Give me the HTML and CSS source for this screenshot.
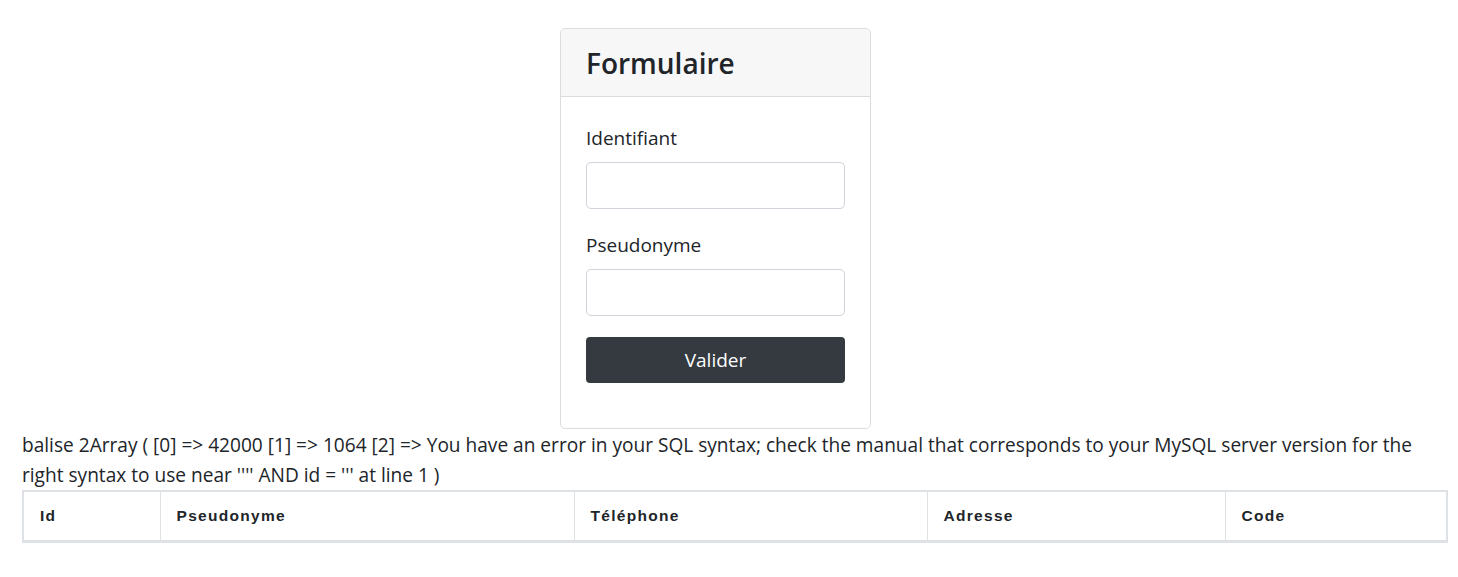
FILE: index.html
```html
<!DOCTYPE html>
<html lang="fr">
<head>
<meta charset="utf-8">
<title>Formulaire</title>
<link rel="stylesheet" href="styles.css">
</head>
<body>
<div class="page">
  <div class="card">
    <div class="card-header"><h3 class="card-title">Formulaire</h3></div>
    <form class="card-body">
      <div class="form-group">
        <label class="label" for="ident">Identifiant</label>
        <input class="input" id="ident" type="text">
      </div>
      <div class="form-group">
        <label class="label" for="pseudo">Pseudonyme</label>
        <input class="input" id="pseudo" type="text">
      </div>
      <button class="btn" type="button">Valider</button>
    </form>
  </div>
  <p class="error">balise 2Array ( [0] =&gt; 42000 [1] =&gt; 1064 [2] =&gt; You have an error in your SQL syntax; check the manual that corresponds to your MySQL server version for the right syntax to use near '''' AND id = ''' at line 1 )</p>
  <table class="table">
    <colgroup>
      <col class="c-id"><col class="c-pseudo"><col class="c-tel"><col class="c-adr"><col class="c-code">
    </colgroup>
    <thead>
      <tr><th>Id</th><th>Pseudonyme</th><th>Téléphone</th><th>Adresse</th><th>Code</th></tr>
    </thead>
  </table>
</div>
</body>
</html>
```
FILE: styles.css
```css
* { box-sizing: border-box; }
html, body { margin: 0; padding: 0; background: #fff; }
body {
  font-family: "Open Sans", "Noto Sans", sans-serif;
  font-size: 19.1px;
  line-height: 30px;
  color: #212529;
}
.page {
  width: 1447px;
  padding: 28px 0 0 22px;
}
.card {
  width: 311px;
  margin-left: 538px;
  border: 1px solid #dcdcdc;
  border-radius: 5px;
  background: #fff;
}
.card-header {
  height: 68px;
  background: #f7f7f7;
  border-bottom: 1px solid #dcdcdc;
  border-radius: 5px 5px 0 0;
  padding: 0 25px;
  display: flex;
  align-items: center;
}
.card-title {
  margin: 0;
  font-size: 28px;
  font-weight: 600;
  line-height: 36px;
  color: #212529;
}
.card-body {
  padding: 26px 24px 45px 25px;
  margin: 0;
}
.form-group { margin-bottom: 21px; }
.label {
  display: block;
  margin-bottom: 9px;
  font-size: 19px;
}
.input {
  display: block;
  width: 259px;
  height: 47px;
  border: 1px solid #ced4da;
  border-radius: 5px;
  background: #fff;
  margin: 0;
}
.btn {
  display: block;
  width: 259px;
  height: 46px;
  border: 0;
  border-radius: 4px;
  background: #343a40;
  color: #fff;
  font-family: inherit;
  font-size: 19px;
  margin: 0;
  padding: 0;
}
.error {
  margin: 1px 0 0;
  width: 1420px;
}
.table {
  width: 1424px;
  border-collapse: collapse;
  table-layout: fixed;
  border: 2px solid #dee2e6;
  border-bottom-width: 3px;
}
.c-id { width: 137px; }
.c-pseudo { width: 414px; }
.c-tel { width: 353px; }
.c-adr { width: 298px; }
.c-code { width: 222px; }
.table th {
  text-align: left;
  font-family: "Liberation Sans", Arial, sans-serif;
  font-size: 15.5px;
  font-weight: bold;
  letter-spacing: 1.3px;
  color: #212529;
  height: 50px;
  padding: 0 16px;
  border-left: 1px solid #dee2e6;
}
```
